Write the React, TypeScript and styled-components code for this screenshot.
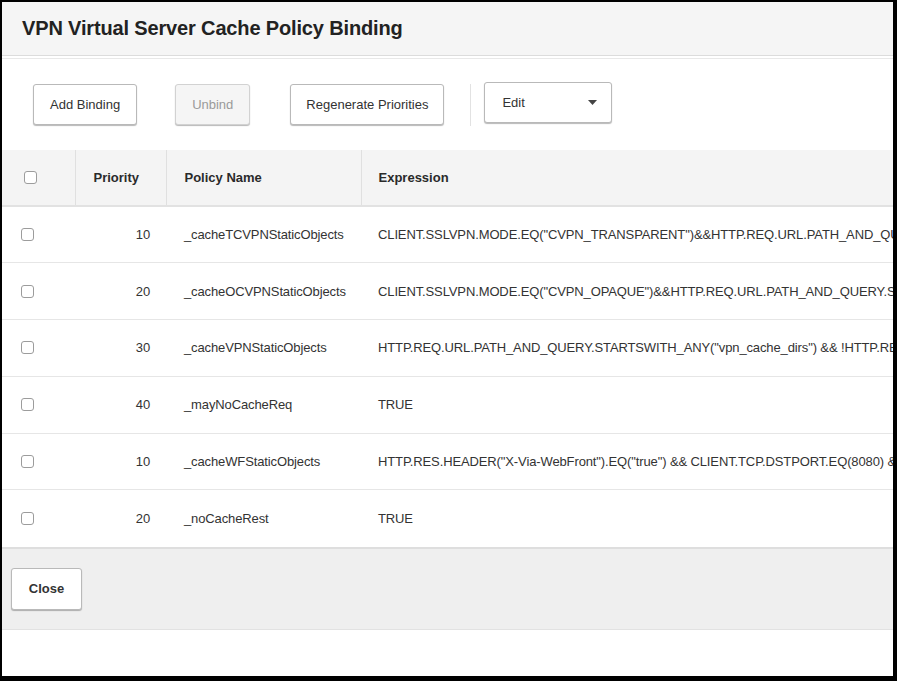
import React from 'react';
import styled, { createGlobalStyle } from 'styled-components';

interface Binding {
  priority: number;
  name: string;
  expression: string;
}

const bindings: Binding[] = [
  {
    priority: 10,
    name: '_cacheTCVPNStaticObjects',
    expression:
      'CLIENT.SSLVPN.MODE.EQ("CVPN_TRANSPARENT")&&HTTP.REQ.URL.PATH_AND_QUERY.STARTSWITH_ANY("vpn_cache_dirs")',
  },
  {
    priority: 20,
    name: '_cacheOCVPNStaticObjects',
    expression:
      'CLIENT.SSLVPN.MODE.EQ("CVPN_OPAQUE")&&HTTP.REQ.URL.PATH_AND_QUERY.STARTSWITH_ANY("vpn_cache_dirs")',
  },
  {
    priority: 30,
    name: '_cacheVPNStaticObjects',
    expression:
      'HTTP.REQ.URL.PATH_AND_QUERY.STARTSWITH_ANY("vpn_cache_dirs") && !HTTP.REQ.URL.PATH_AND_QUERY.CONTAINS("?")',
  },
  { priority: 40, name: '_mayNoCacheReq', expression: 'TRUE' },
  {
    priority: 10,
    name: '_cacheWFStaticObjects',
    expression:
      'HTTP.RES.HEADER("X-Via-WebFront").EQ("true") && CLIENT.TCP.DSTPORT.EQ(8080) && HTTP.REQ.URL.ENDSWITH(".js")',
  },
  { priority: 20, name: '_noCacheRest', expression: 'TRUE' },
];

const GlobalStyle = createGlobalStyle`
  html, body {
    margin: 0;
    padding: 0;
    background: #000;
  }
  * {
    box-sizing: border-box;
  }
`;

const Frame = styled.div`
  width: 897px;
  height: 681px;
  border-style: solid;
  border-color: #000;
  border-width: 2px 4px 5px 2px;
  background: #fff;
  overflow: hidden;
  display: flex;
  flex-direction: column;
  font-family: 'Liberation Sans', Arial, sans-serif;
  color: #333;
`;

const Header = styled.div`
  height: 54px;
  flex: none;
  display: flex;
  align-items: center;
  padding-left: 20px;
  background: #f5f5f5;
  border-bottom: 1px solid #dcdcdc;
`;

const Title = styled.h1`
  margin: 0;
  font-size: 20px;
  font-weight: bold;
  letter-spacing: -0.15px;
  color: #222;
`;

const Toolbar = styled.div`
  flex: none;
  height: 92px;
  margin-top: 2px;
  border-top: 1px solid #e8e8e8;
  display: flex;
  align-items: center;
  padding-left: 31px;
`;

const Button = styled.button<{ $bold?: boolean }>`
  height: 41px;
  padding: 0 16px;
  background: #fff;
  border: 1px solid #b9b9b9;
  border-radius: 3px;
  box-shadow: 0 1px 1px rgba(0, 0, 0, 0.28);
  font-family: 'Liberation Sans', Arial, sans-serif;
  font-size: 13px;
  font-weight: ${(p) => (p.$bold ? 'bold' : 'normal')};
  color: #333;
  cursor: pointer;

  &:disabled {
    background: #f5f5f5;
    color: #9a9a9a;
    border-color: #d2d2d2;
    cursor: default;
  }
`;

const ToolButton = styled(Button)`
  margin-right: 38px;

  &:nth-of-type(2) {
    margin-right: 40px;
  }
  &:nth-of-type(3) {
    padding: 0 15px;
    margin-right: 26px;
  }
`;

const Separator = styled.div`
  width: 1px;
  height: 42px;
  background: #e2e2e2;
  margin-right: 13px;
`;

const Dropdown = styled.button`
  width: 128px;
  height: 41px;
  margin-bottom: 4px;
  padding: 0 14px 0 17px;
  display: flex;
  align-items: center;
  justify-content: space-between;
  background: #fff;
  border: 1px solid #b9b9b9;
  border-radius: 3px;
  box-shadow: 0 1px 1px rgba(0, 0, 0, 0.28);
  font-family: 'Liberation Sans', Arial, sans-serif;
  font-size: 13px;
  color: #333;
`;

const TableWrap = styled.div`
  flex: none;
  overflow: hidden;
`;

const Table = styled.table`
  width: 1400px;
  table-layout: fixed;
  border-collapse: collapse;
  white-space: nowrap;
`;

const Th = styled.th<{ $pad?: number }>`
  height: 56px;
  padding: 0 0 0 ${(p) => p.$pad ?? 18}px;
  background: #f4f4f4;
  border-bottom: 2px solid #e2e2e2;
  border-right: 1px solid #e0e0e0;
  text-align: left;
  font-size: 13px;
  font-weight: bold;
  color: #2a2a2a;

  &:last-child {
    border-right: none;
  }
`;

const Td = styled.td<{ $align?: 'left' | 'right'; $pad?: number }>`
  height: 56.8px;
  padding: ${(p) => (p.$align === 'right' ? `0 16px 0 0` : `0 0 0 ${p.$pad ?? 18}px`)};
  text-align: ${(p) => p.$align ?? 'left'};
  border-bottom: 1px solid #e6e6e6;
  font-size: 13px;
  letter-spacing: -0.12px;
  color: #333;
  overflow: hidden;
`;

const Row = styled.tr`
  &:last-child td {
    border-bottom: none;
  }
`;

const Checkbox = styled.input.attrs({ type: 'checkbox' })`
  appearance: none;
  width: 13px;
  height: 13px;
  margin: 0;
  border: 1px solid #9c9c9c;
  border-radius: 3px;
  background: #fff;
  display: block;
`;

const Footer = styled.div`
  flex: none;
  height: 83px;
  display: flex;
  align-items: center;
  padding-left: 9px;
  background: #efefef;
  border-top: 2px solid #dedede;
  border-bottom: 1px solid #e2e2e2;
`;

const CloseButton = styled(Button)`
  height: 42px;
  width: 71px;
  padding: 0;
`;

const Caret = () => (
  <svg width="9" height="5" viewBox="0 0 9 5">
    <path d="M0 0h9L4.5 5z" fill="#444" />
  </svg>
);

export default function App() {
  return (
    <>
      <GlobalStyle />
      <Frame>
        <Header>
          <Title>VPN Virtual Server Cache Policy Binding</Title>
        </Header>
        <Toolbar>
          <ToolButton>Add Binding</ToolButton>
          <ToolButton disabled>Unbind</ToolButton>
          <ToolButton>Regenerate Priorities</ToolButton>
          <Separator />
          <Dropdown>
            Edit
            <Caret />
          </Dropdown>
        </Toolbar>
        <TableWrap>
          <Table>
            <colgroup>
              <col style={{ width: 73 }} />
              <col style={{ width: 91 }} />
              <col style={{ width: 195 }} />
              <col />
            </colgroup>
            <thead>
              <tr>
                <Th $pad={22}>
                  <Checkbox />
                </Th>
                <Th>Priority</Th>
                <Th>Policy Name</Th>
                <Th $pad={17}>Expression</Th>
              </tr>
            </thead>
            <tbody>
              {bindings.map((b, i) => (
                <Row key={i}>
                  <Td $pad={19}>
                    <Checkbox />
                  </Td>
                  <Td $align="right">{b.priority}</Td>
                  <Td>{b.name}</Td>
                  <Td $pad={17}>{b.expression}</Td>
                </Row>
              ))}
            </tbody>
          </Table>
        </TableWrap>
        <Footer>
          <CloseButton $bold>Close</CloseButton>
        </Footer>
      </Frame>
    </>
  );
}
